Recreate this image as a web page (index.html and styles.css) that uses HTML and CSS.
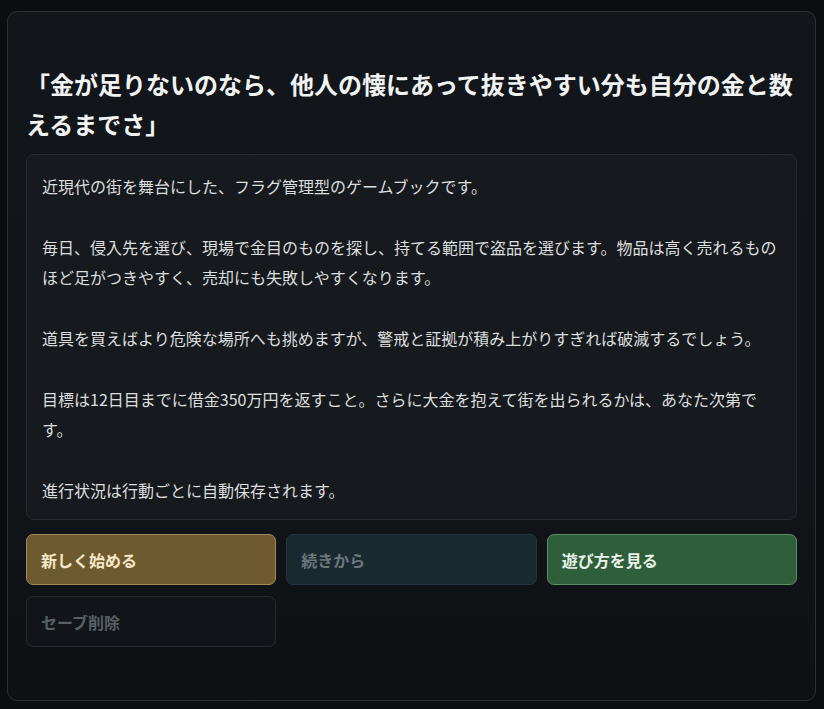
FILE: index.html
```html
<!DOCTYPE html>
<html lang="ja">
<head>
<meta charset="utf-8">
<title>ゲームブック</title>
<link rel="stylesheet" href="styles.css">
</head>
<body>
<main class="card">
  <h1 class="title">「金が足りないのなら、他人の懐にあって抜きやすい分も自分の金と数えるまでさ」</h1>
  <section class="desc">
    <p>近現代の街を舞台にした、フラグ管理型のゲームブックです。</p>
    <p>毎日、侵入先を選び、現場で金目のものを探し、持てる範囲で盗品を選びます。物品は高く売れるものほど足がつきやすく、売却にも失敗しやすくなります。</p>
    <p>道具を買えばより危険な場所へも挑めますが、警戒と証拠が積み上がりすぎれば破滅するでしょう。</p>
    <p>目標は12日目までに借金350万円を返すこと。さらに大金を抱えて街を出られるかは、あなた次第です。</p>
    <p>進行状況は行動ごとに自動保存されます。</p>
  </section>
  <div class="actions">
    <button class="btn btn-new">新しく始める</button>
    <button class="btn btn-continue" disabled>続きから</button>
    <button class="btn btn-help">遊び方を見る</button>
    <button class="btn btn-delete" disabled>セーブ削除</button>
  </div>
</main>
</body>
</html>
```

FILE: styles.css
```css
* { box-sizing: border-box; }

html, body {
  margin: 0;
  padding: 0;
}

body {
  background: #0b0e11;
  font-family: "Noto Sans CJK JP", "Noto Sans", sans-serif;
  padding: 11px 8px 8px 7px;
  min-height: 709px;
}

.card {
  border: 1px solid #2c3136;
  border-radius: 10px;
  background: linear-gradient(180deg, #12161a 0%, #111519 60%, #0e1114 100%);
  padding: 52px 18px 52px 18px;
  min-height: 690px;
}

.title {
  margin: 0 0 10px 0;
  font-size: 24px;
  line-height: 40px;
  font-weight: 700;
  color: #f1f2f2;
  letter-spacing: 0;
}

.desc {
  background: #161a1e;
  border: 1px solid #262b30;
  border-radius: 8px;
  padding: 16px 15px 14px 15px;
  color: #dcdedf;
  font-size: 16px;
  line-height: 30.4px;
}

.desc p {
  margin: 0;
}

.desc p + p {
  margin-top: 30.4px;
}

.actions {
  margin-top: 14px;
  display: grid;
  grid-template-columns: 1fr 1fr 1fr;
  gap: 11px 10px;
}

.btn {
  height: 51px;
  border-radius: 7px;
  border: 1px solid;
  font-family: inherit;
  font-size: 16px;
  font-weight: 700;
  text-align: left;
  padding: 0 14px;
  cursor: pointer;
}

.btn-new {
  background: #6e5a2f;
  border-color: #a38a56;
  color: #f6e8c8;
}

.btn-continue {
  background: #182930;
  border-color: #23363f;
  color: #6c777c;
  cursor: default;
}

.btn-help {
  background: #2f5e3b;
  border-color: #5e8c66;
  color: #eaf4ea;
}

.btn-delete {
  background: #111519;
  border-color: #252a2f;
  color: #585f64;
  cursor: default;
}
```
